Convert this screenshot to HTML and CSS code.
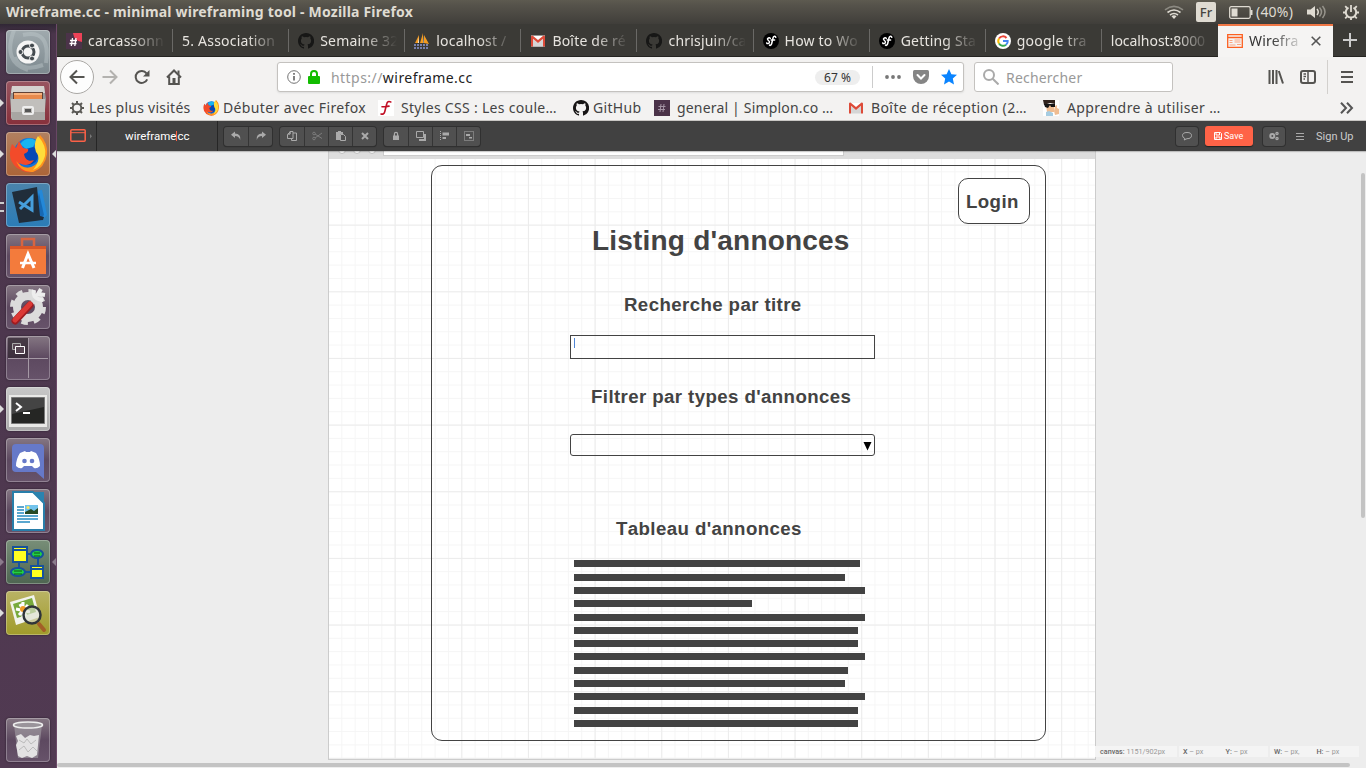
FILE: index.html
```html
<!DOCTYPE html>
<html lang="fr">
<head>
<meta charset="utf-8">
<title>Wireframe.cc - minimal wireframing tool</title>
<link rel="stylesheet" href="styles.css">
</head>
<body>
<svg class="defs">
  <symbol id="github" viewBox="0 0 16 16"><path d="M8 0C3.58 0 0 3.58 0 8c0 3.54 2.29 6.53 5.47 7.59.4.07.55-.17.55-.38v-1.34c-2.23.48-2.7-1.07-2.7-1.07-.36-.92-.89-1.17-.89-1.17-.73-.5.05-.49.05-.49.81.06 1.24.83 1.24.83.72 1.23 1.88.87 2.34.67.07-.52.28-.87.5-1.07-1.77-.2-3.64-.89-3.64-3.95 0-.87.31-1.59.82-2.15-.08-.2-.36-1.02.08-2.12 0 0 .67-.21 2.2.82a7.6 7.6 0 0 1 4 0c1.53-1.04 2.2-.82 2.2-.82.44 1.1.16 1.92.08 2.12.51.56.82 1.27.82 2.15 0 3.07-1.87 3.75-3.65 3.95.29.25.54.73.54 1.48v2.19c0 .21.15.46.55.38A8 8 0 0 0 8 0z"/></symbol>
  <symbol id="gmail" viewBox="0 0 16 16"><path fill="#eee" d="M1 2.500h14v11H1z"/><path fill="#fff" d="M2 3h12L8 8z"/><path fill="#d5d5d5" d="M3 13.500V6l5 4 5-4v7.500z"/><path fill="#dd4b39" d="M1 13.500v-10Q1 2.500 2.500 2.500L8 7l5.500-4.500Q15 2.500 15 3.500v10h-2V5.700L8 10 3 5.700v7.800z"/></symbol>
  <symbol id="symfony" viewBox="0 0 16 16"><circle cx="8" cy="8" r="8"/><path fill="none" stroke="#fff" stroke-width="1.500" stroke-linecap="round" d="M7.300 5.400C6.500 4.200 4 5 4.600 6.600c.4 1 2.200 1.200 1.800 2.800-.3 1.400-2.300 1.600-2.700.5M12.800 4.300c-.3-1.500-2.300-1.300-2.800.7L8.700 10.500c-.4 1.700-1.600 2.400-2.200 1.500M8.200 7h3.400"/></symbol>
  <symbol id="firefox" viewBox="0 0 40 40"><circle cx="21" cy="19" r="15" fill="#1674d8"/><path fill="#0648b5" d="M20 11q10 2 10 10t-9 10q-10-1-8-10z"/><path fill="#18b4f0" d="M12 10Q20 1 28 7l-3 6-7 2z"/><path fill="#f34b2a" d="M4 10l4 4 3-7 4 7 5 1c1 3-2 4-4 5 1 6 5 8 10 6q-5 8-15 3 8 12 19 6Q22 42 9 34-2 25 4 10z"/><path fill="#ff931e" d="M8 27q9 11 19 4 7-5 5-14-7-9 0-16 8 8 7 19-2 14-14 18Q13 39 8 27z"/><path fill="#ffdc3b" d="M30 2q9 10 7 20-3 11-12 14 9-11 3-18-3-9 2-16z"/></symbol>
</svg>

<div class="desktop">
  <header class="panel">
    <span class="panel-title">Wireframe.cc - minimal wireframing tool - Mozilla Firefox</span>
    <svg class="i-wifi" viewBox="0 0 20 14" fill="none" stroke-width="1.600"><path stroke="#8c8a82" d="M1 4.800Q10-2 19 4.800"/><path stroke="#dfdbd2" d="M3.500 7.500q6.500-5 13 0M6 10q4-3 8 0"/><path fill="#dfdbd2" d="M7.500 11.300q2.500-2 5 0L10 14z"/></svg>
    <span class="lang">Fr</span>
    <svg class="i-battery" viewBox="0 0 24 13" fill="none" stroke="#dfdbd2"><rect x=".7" y=".7" width="20.500" height="11.600" rx="1.500" stroke-width="1.300"/><path fill="#dfdbd2" stroke="none" d="M2.500 2.500h6v8h-6z"/><path d="M22.500 4v5" stroke-width="2"/></svg>
    <span class="charge">(40%)</span>
    <svg class="i-sound" viewBox="0 0 20 16" fill="none" stroke-width="1.500"><path fill="#dfdbd2" d="M0 5.500h3.500L8 2v12l-4.500-3.500H0z"/><path stroke="#dfdbd2" d="M10 5q2.500 3 0 6"/><path stroke="#96938b" d="M12.500 3.500q4 4.500 0 9M15.500 2q5 6 0 12"/></svg>
    <svg class="i-gear" viewBox="0 0 16 16" fill="none" stroke="#dfdbd2"><path stroke-width="2" d="M5.500 3.700a5.200 5.200 0 1 0 5 0"/><path stroke-width="1.800" d="M8 1v7M2.200 2.200L4 4M13.800 2.200L12 4M0 8.500h3M13 8.500h3M2.200 14.300L4.200 12.300M13.800 14.300l-2-2M8 13.500V16"/></svg>
  </header>

  <div class="shell">
    <nav class="launcher">
      <div class="tile tile-dash"><svg viewBox="0 0 44 44"><path fill="none" stroke="#c2ccd0" stroke-opacity=".4" stroke-width="4" d="M8 0Q-4 32 22 40M17 5q28-6 23 28M9 27q5 16 28 8"/><circle cx="22" cy="22" r="11.500" fill="#f5f5f5"/><circle cx="22" cy="22" r="6" fill="none" stroke="#444b50" stroke-width="3"/><g fill="#444b50" stroke="#f5f5f5" stroke-width="1"><circle cx="14.500" cy="22" r="2.500"/><circle cx="26" cy="15.500" r="2.500"/><circle cx="26" cy="28.500" r="2.500"/></g></svg></div>
      <div class="tile tile-files run"><svg viewBox="0 0 44 44"><path fill="#999" d="M6 5h32l2 13-2 21H6L4 18z"/><path fill="#d5d2ce" d="M6 5h32l1 7H5z"/><path fill="#614135" d="M7 11h30v8H7z"/><path fill="#e78a4c" d="M8 12h28v6H8z"/><path fill="#f7b27e" d="M8 12h28v2H8z"/><path fill="#c1bfbc" d="M5 18h34v17q0 4-3 4H8q-3 0-3-4z"/><path fill="#a8a6a3" d="M5 31h34v8H6z"/><rect x="17" y="26" width="10" height="7" rx="1" fill="none" stroke="#eee" stroke-width="2"/><path fill="#555" d="M19 28h6v3h-6z"/></svg></div>
      <div class="tile tile-firefox run focus"><svg viewBox="-2 -2 44 44"><use href="#firefox" width="40" height="40"/></svg></div>
      <div class="tile tile-code pair"><svg viewBox="0 0 44 44"><path fill="#2488d8" d="M28 8l8-1 5 25-6 6-10-2z"/><path fill="#1769b4" d="M33 10l5 22-5 5-7-3z"/><path fill="#202d3a" d="M6 9l25-5 3 29 4 1-1 3-24 3z"/><path fill="none" stroke="#469edb" stroke-width="3" d="M13 19l13 8V14L14 26"/></svg></div>
      <div class="tile"><svg viewBox="0 0 44 44"><path fill="none" stroke="#d66542" stroke-width="2.500" d="M16 13V5h12v8"/><path fill="#f37b3c" d="M4 12h36v28H4z"/><path fill="#d85628" d="M4 12h36v3H4z"/><path fill="none" stroke="#fff" stroke-width="3" d="M16.500 34l5.500-14 6 14"/><path stroke="#fff" stroke-width="2.500" d="M14 29h16"/></svg></div>
      <div class="tile"><svg viewBox="0 0 44 44"><circle cx="22" cy="22" r="11" fill="none" stroke="#dcdcdc" stroke-width="8"/><circle cx="22" cy="22" r="16" fill="none" stroke="#dcdcdc" stroke-width="4" stroke-dasharray="6.500 6.060"/><path stroke="#d9d9d9" stroke-width="5" d="M26 18l8-8"/><path fill="none" stroke="#eee" stroke-width="4" d="M28 5q-2 9 9 10M35 4l-3 5 7 1"/><path stroke="#9f1c20" stroke-width="7" stroke-linecap="round" d="M9 36l15-16"/><path stroke="#dc3935" stroke-width="5" stroke-linecap="round" d="M9 35l15-16"/></svg></div>
      <div class="tile tile-spaces"><svg viewBox="0 0 44 44"><path fill="#2d242d" opacity=".7" d="M2 2h20v20H2z"/><path stroke="#a599a5" d="M22.500 2v40M2 22.500h40"/><path fill="#574653" stroke="#aaa" d="M6.500 7.500h8v6h-8z"/><path fill="#574653" stroke="#fff" d="M9.500 10.500h9v7h-9z"/></svg></div>
      <div class="tile tile-term run"><svg viewBox="0 0 44 44"><path fill="#e9e9e7" d="M3 8h38v32H3z"/><path fill="#252624" stroke="#777" d="M5.500 10.500h33v26h-33z"/><path fill="#444" d="M6 11h32v9L6 27z"/><path fill="none" stroke="#fff" stroke-width="2" d="M10 16l5 4-5 4M17 26h7"/></svg></div>
      <div class="tile"><svg viewBox="0 0 44 44"><path fill="#6679c9" d="M10 6h24q4 0 4 4v31l-8-7H10q-4 0-4-4V10q0-4 4-4z"/><path fill="#fff" d="M14 15l5-2 1 1h4l1-1 5 2q4 6 4 13-3 3-6 2l-2-2h-8l-2 2q-3 1-6-2 0-7 4-13z"/><g fill="#6679c9"><circle cx="18.500" cy="23" r="2.300"/><circle cx="26" cy="23" r="2.300"/></g></svg></div>
      <div class="tile"><svg viewBox="0 0 44 44"><path fill="#fff" stroke="#287eaa" stroke-width="2" d="M7 3h20l11 11v27H7z"/><path fill="#2a83af" d="M27 3h11v11z"/><path stroke="#258bc0" stroke-width="1.500" d="M11 18h7M11 21h7M11 24h7M11 27h21M11 30h21M11 33h13"/><path fill="#72c3ec" d="M19 16h13v9H19z"/><path fill="#264923" d="M19 23l6-3 3 2 4-3v6H19z"/><circle cx="22" cy="18.500" r="1.500" fill="#ffe65b"/></svg></div>
      <div class="tile tile-dia run focus dim"><svg viewBox="0 0 44 44"><g stroke="#16529b" stroke-width="2"><path fill="none" d="M22 14h10v15M13 22v10h13"/><path fill="#ffff20" d="M7 7h14v15H7zM25 26h12v12H25z"/><path d="M7 10h14M25 29h12"/><ellipse cx="31" cy="14" rx="6" ry="4" fill="#21d043"/><ellipse cx="12" cy="32" rx="7" ry="4" fill="#21d043"/></g><path stroke="#125319" d="M28 13h6M28 16h6M8 31h8M8 34h8"/></svg></div>
      <div class="tile tile-viewer run"><svg viewBox="0 0 44 44"><path fill="#f2f3ec" d="M4 11l24-7 6 22-24 8z"/><path fill="#78aa3d" d="M7 13l19-6 4 14-19 6z"/><path stroke="#fff" stroke-width="3" d="M10 18l14 3M14 13l6 12M22 14l-9 10M17 11v15"/><circle cx="17" cy="18" r="3" fill="#ef9c26"/><circle cx="26" cy="24" r="8.500" fill="#dde0d1" fill-opacity=".65" stroke="#30353a" stroke-width="2.500"/><path stroke="#a35f27" stroke-width="4" stroke-linecap="round" d="M33 33l5 6"/></svg></div>
      <div class="tile tile-trash"><svg viewBox="0 0 44 44"><path fill="#aaa6ab" fill-opacity=".55" d="M8 7h28l-4 33H12z"/><ellipse cx="22" cy="7" rx="14.500" ry="3" fill="#9a949b" stroke="#eee" stroke-width="1.500"/><path fill="#e3e2e3" d="M10 18l5-2 4 4 5-3 4 1 5-1-2 20-5 3-5-2-5 2-4-2-1-6-1-5 2-4z"/><path fill="none" stroke="#bbb" d="M13 22l5 3 3-4 4 5 5-4M13 32l5-4 4 6 5-5 4 4"/></svg></div>
    </nav>

    <main class="browser">
      <div class="tabs">
        <div class="tab"><svg class="fav" viewBox="0 0 16 16"><path fill="#4b3349" d="M0 0h16v16H0z"/><path fill="#ed4257" d="M7 0h9v9Q8 8 7 0z"/><path stroke="#fff" stroke-width="1.300" d="M6.500 5L5.300 13M10 5L8.800 13M4 7.500h7M3.500 10.500h7"/></svg><span class="tab-text">carcassonn</span></div>
        <div class="tab"><span class="tab-text">5. Association</span></div>
        <div class="tab"><svg class="fav" fill="#171716"><use href="#github"/></svg><span class="tab-text">Semaine 32</span></div>
        <div class="tab"><svg class="fav" viewBox="0 0 16 16"><path fill="#f39b21" d="M1 10l4-8v8zM6 10l3-10v10zM10 10V2l5 9z"/><path fill="#eee" d="M5 4v6H4zM9.500 2v8H9z"/><path stroke="#7780ad" stroke-width="2" stroke-dasharray="2 1" d="M0 12h15M0 15h15"/></svg><span class="tab-text">localhost /</span></div>
        <div class="tab"><svg class="fav"><use href="#gmail"/></svg><span class="tab-text">Boîte de ré</span></div>
        <div class="tab"><svg class="fav" fill="#171716"><use href="#github"/></svg><span class="tab-text">chrisjuin/ca</span></div>
        <div class="tab"><svg class="fav"><use href="#symfony"/></svg><span class="tab-text">How to Wo</span></div>
        <div class="tab"><svg class="fav"><use href="#symfony"/></svg><span class="tab-text">Getting Sta</span></div>
        <div class="tab"><svg class="fav" viewBox="0 0 16 16" fill="none" stroke-width="2"><circle cx="8" cy="8" r="8" fill="#fff"/><path stroke="#ea4335" d="M4 5.500A4.700 4.700 0 0 1 11.500 5"/><path stroke="#fbbc05" d="M4 5.500a4.700 4.700 0 0 0 0 5"/><path stroke="#34a853" d="M4 10.500a4.700 4.700 0 0 0 7 1.200"/><path stroke="#4285f4" d="M11 11.700q2-1.500 1.700-3.700H8"/></svg><span class="tab-text">google tra</span></div>
        <div class="tab"><span class="tab-text tight">localhost:8000</span></div>
        <div class="tab active"><svg class="fav" viewBox="0 0 16 16" fill="none" stroke="#fc6021"><path stroke-width="1.300" d="M.7 1.700h14.600v12.600H.7z"/><path stroke-width="1.500" d="M1 4.500h14"/><path stroke="#fba581" d="M2.500 7.500h3M2.500 9.500h3M7.500 7h6M7.500 9h6M2.500 12h6M10 11.500h4"/></svg><span class="tab-text">Wirefra</span><svg class="close" viewBox="0 0 10 10"><path d="M.7.700l8.600 8.600M9.300.700L.7 9.300"/></svg></div>
        <div class="newtab"><svg viewBox="0 0 14 14"><path d="M7 0v14M0 7h14"/></svg></div>
      </div>

      <div class="navbar">
        <div class="back"><svg viewBox="0 0 16 16"><path d="M15.500 8H1.500M8 1.500L1.500 8 8 14.500"/></svg></div>
        <svg class="nav-ico forward" viewBox="0 0 16 16"><path d="M.5 8h14M8 1.500L14.500 8 8 14.500"/></svg>
        <svg class="nav-ico reload" viewBox="0 0 16 16"><path d="M13.200 10.300A6 6 0 1 1 12.500 4.300"/><path class="solid" d="M15.500 1v6.500H9z"/></svg>
        <svg class="nav-ico home" viewBox="0 0 16 16"><path d="M1 8.500l7-7 7 7M3.200 7.500V15h9.600V7.500"/><path class="solid" d="M6.500 9h3v6h-3zM11.500 1.500h2V6l-2-2z"/></svg>
        <div class="urlbar">
          <svg class="info" viewBox="0 0 14 14"><circle cx="7" cy="7" r="6.300"/><path stroke-width="1.800" d="M7 6v4.500M7 3v1.700"/></svg>
          <svg class="lock" viewBox="0 0 12 14"><path fill="none" stroke="#12bc00" stroke-width="2" d="M3 7V4a3 3 0 0 1 6 0v3"/><rect y="6" width="12" height="8" rx="1" fill="#12bc00"/></svg>
          <span class="url"><span class="scheme">https://</span>wireframe.cc</span>
          <span class="zoomlevel">67 %</span>
          <span class="url-sep"></span>
          <svg class="dots" viewBox="0 0 16 4"><circle cx="2" cy="2" r="1.900"/><circle cx="8" cy="2" r="1.900"/><circle cx="14" cy="2" r="1.900"/></svg>
          <svg class="pocket" viewBox="0 0 16 14"><path fill="#858585" d="M1.500 0h13Q16 0 16 1.500V6a8 8 0 0 1-16 0V1.500Q0 0 1.500 0z"/><path fill="none" stroke="#fff" stroke-width="2" stroke-linecap="round" d="M4.500 5L8 8.500 11.500 5"/></svg>
          <svg class="star" viewBox="0 0 16 16"><path fill="#0a84ff" d="M8 0l2.400 5.200 5.600.6-4.200 3.800L13 15.500l-5-2.900-5 2.900 1.200-5.900L0 5.800l5.600-.6z"/></svg>
        </div>
        <div class="search"><svg viewBox="0 0 16 16"><circle cx="6" cy="6" r="5"/><path d="M9.700 9.700L15.500 15.500"/></svg><span>Rechercher</span></div>
        <svg class="nav-ico library" viewBox="0 0 16 14"><path d="M1.500 0v14M5 0v14M8.500 0v14M10.800 1l4.200 12.500"/></svg>
        <svg class="nav-ico sidebar" viewBox="0 0 16 14"><rect x="1" y="1" width="14" height="12" rx="2"/><path stroke-width="1.500" d="M8 1v12M3.500 4h2.500M3.500 6.500h2.500M3.500 9h1.500"/></svg>
        <span class="nav-sep"></span>
        <svg class="nav-ico menu" viewBox="0 0 12 12"><path d="M0 1h12M0 6h12M0 11h12"/></svg>
      </div>

      <div class="bookmarks">
        <div class="bm b1"><svg viewBox="0 0 16 16" fill="none" stroke="#5a5955"><circle cx="8" cy="8" r="4.300" stroke-width="2"/><path stroke-width="2" d="M8 1v2.500M8 12.500V15M1 8h2.500M12.500 8H15M3 3l2 2M11 11l2 2M3 13l2-2M11 5l2-2"/></svg><span>Les plus visités</span></div>
        <div class="bm b2"><svg viewBox="1 1 38 38"><use href="#firefox" width="40" height="40"/></svg><span>Débuter avec Firefox</span></div>
        <div class="bm b3"><svg viewBox="0 0 16 16"><path fill="#fff" d="M0 0h16v16H0z"/><path fill="none" stroke="#c20f25" stroke-width="1.600" stroke-linecap="round" d="M12.800 2Q9.500.5 8.700 4L6.800 11.500Q6 14.800 3 14M4 6.700q3 .2 7-.6"/></svg><span>Styles CSS : Les coule…</span></div>
        <div class="bm b4"><svg fill="#171515"><use href="#github"/></svg><span>GitHub</span></div>
        <div class="bm b5"><svg viewBox="0 0 16 16"><path fill="#4b3349" d="M0 0h16v16H0z"/><path stroke="#a393a3" d="M7 4L6 12M10 4L9 12M4.500 6.500h7M4 9.500h7"/></svg><span>general | Simplon.co …</span></div>
        <div class="bm b6"><svg><use href="#gmail"/></svg><span>Boîte de réception (2…</span></div>
        <div class="bm b7"><svg viewBox="0 0 16 16"><path fill="#fff" d="M0 0h16v16H0z"/><path fill="#efbc91" d="M3 5h8v7H4zM12 6l2-1v3l2 1v5l-4 1-1-4z"/><path fill="#30231d" d="M0 0h12v4L7 3 1 5z"/><path fill="#151515" d="M1 4h11v3H8L7 5 5 8 2 7z"/><path fill="#a6cce1" d="M3 12l3-1 4 2v3H3z"/></svg><span>Apprendre à utiliser …</span></div>
        <svg class="more" viewBox="0 0 14 12"><path d="M1 .7L6 6l-5 5.300M7 .7L12 6l-5 5.300"/></svg>
      </div>

      <div class="appbar">
        <div class="screen"><svg viewBox="0 0 22 14" fill="none" stroke="#fc6147"><rect x=".8" y=".8" width="14.400" height="11.500" rx="1" stroke-width="1.500"/><path d="M1 3.700h14"/><path fill="#777" stroke="none" d="M20 5l2 2.300-2 2.300z"/></svg></div>
        <div class="brand">wireframe<i></i>cc</div>
        <div class="group">
          <b><svg viewBox="0 0 10 10"><path d="M0 3.700L4 .5v2q6 0 5.300 6.500Q8 5 4 5v2z"/></svg></b>
          <b><svg viewBox="0 0 10 10"><path d="M10 3.700L6 .5v2Q0 2.500.7 9 2 5 6 5v2z"/></svg></b>
        </div>
        <div class="group">
          <b><svg class="line" viewBox="0 0 10 10"><path d="M3 3V.5h3v7H.5V3.500L3 1M6 2h3.500v7.500h-5V7.500M3 .7v2.500H.7"/></svg></b>
          <b><svg class="line dimmed" viewBox="0 0 10 10"><circle cx="2" cy="2.500" r="1.300"/><circle cx="2" cy="7.500" r="1.300"/><path d="M3 3l7 4.500M3 7l7-5"/></svg></b>
          <b><svg viewBox="0 0 10 10"><path d="M0 1h2V0h3v1h2v2H4v6H0z"/><path fill="none" stroke="#aaa" d="M4.500 3.500h3l2 2v4h-5z"/></svg></b>
          <b><svg class="line x" viewBox="0 0 10 10"><path d="M2 2l6 6M8 2L2 8"/></svg></b>
        </div>
        <div class="group">
          <b><svg viewBox="0 0 10 10"><path d="M2 4.500h6V9H2z"/><path fill="none" stroke="#aaa" stroke-width="1.200" d="M3.400 5V3a1.600 1.600 0 0 1 3.200 0v2"/></svg></b>
          <b><svg viewBox="0 0 10 10"><path d="M3 8h5V3h2v7H3z"/><path fill="none" stroke="#aaa" d="M.5.500h7v6h-7z"/></svg></b>
          <b><svg viewBox="0 0 10 10"><path d="M2.500 1.500H9v3H2.500zM2.500 6H6v2H2.500z"/><path stroke="#aaa" stroke-dasharray="1 1" d="M.5 0v10"/></svg></b>
          <b><svg viewBox="0 0 10 10"><path fill="none" stroke="#aaa" stroke-dasharray="1 1" d="M.5.500h9v9h-9z"/><path d="M2 3h4v2H2zM5 6h3v1.500H5z"/></svg></b>
        </div>
        <div class="app-right">
          <b class="solo"><svg class="line" viewBox="0 0 10 10"><path d="M3 7.700Q.5 6.500.5 4.500.5 1.500 5 1.500t4.500 3Q9.500 7.700 5 7.700L2 9z"/></svg></b>
          <b class="save"><svg viewBox="0 0 8 8" fill="none" stroke="#fff"><path d="M.5.500h6l1 1v6h-7zM2 .5V3h3.500V.5M2 7.500V5h4v2.500"/></svg>Save</b>
          <b class="solo cogs"><svg class="line" viewBox="0 0 10 10"><circle cx="3.300" cy="5" r="2" stroke-width="2"/><circle cx="8" cy="2.500" r="1.100" stroke-width="1.300"/><circle cx="8" cy="7.500" r="1.100" stroke-width="1.300"/></svg></b>
          <svg class="burger" viewBox="0 0 8 7"><path d="M0 .5h8M0 3.500h8M0 6.500h8"/></svg>
          <span class="signup">Sign Up</span>
        </div>
      </div>

      <div class="workspace">
        <div class="canvas">
          <div class="chrome"><i></i><i></i><i></i><span></span></div>
          <div class="grid"></div>
          <div class="wf frame"></div>
          <div class="wf login">Login</div>
          <div class="wf title">Listing d'annonces</div>
          <div class="wf sub s1">Recherche par titre</div>
          <div class="wf input"></div>
          <div class="wf sub s2">Filtrer par types d'annonces</div>
          <div class="wf select"><svg viewBox="0 0 8 9"><path d="M0 0h8L4 8.500z"/></svg></div>
          <div class="wf sub s3">Tableau d'annonces</div>
          <div class="wf lines"><i class="w286"></i><i class="w271"></i><i></i><i class="w178"></i><i></i><i class="w284"></i><i class="w284"></i><i></i><i class="w274"></i><i class="w271"></i><i></i><i class="w284"></i><i class="w284"></i></div>
        </div>
        <div class="status">
          <div><span><b>canvas:</b> 1151/902px</span></div>
          <div><span><b>X</b> – px</span><span><b>Y:</b> – px</span></div>
          <div><span><b>W:</b> – px,</span><span><b>H:</b> – px</span></div>
        </div>
        <div class="vscroll"></div>
        <div class="hscroll"></div>
      </div>
    </main>
  </div>
</div>
</body>
</html>
```
FILE: styles.css
```css
* { box-sizing: border-box; }
body { margin: 0; overflow: hidden; font: 14px/20px "Noto Sans", sans-serif; }
svg { display: block; flex: none; }
.defs { position: absolute; width: 0; height: 0; }
.desktop { width: 1366px; height: 768px; display: flex; flex-direction: column; }

/* Top panel */
.panel { height: 24px; flex: none; display: flex; align-items: center; padding: 0 7px 0 6px; background: linear-gradient(#5d5a50, #56534b 20%, #403e3a); color: #dfdbd2; }
.panel-title { width: 1158px; font-weight: 700; font-size: 14px; letter-spacing: .2px; white-space: nowrap; }
.i-wifi { width: 20px; height: 14px; }
.lang { margin-left: 12px; width: 20px; height: 20px; border-radius: 2px; background: #dfdbd2; color: #47453f; text-align: center; font-size: 13px; font-weight: 500; }
.i-battery { width: 24px; height: 13px; margin-left: 13px; }
.charge { margin-left: 3px; width: 39px; white-space: nowrap; letter-spacing: .2px; }
.i-sound { width: 20px; height: 16px; margin-left: 12px; }
.i-gear { width: 16px; height: 16px; margin-left: auto; }

.shell { flex: 1; display: flex; min-height: 0; }

/* Launcher */
.launcher { width: 57px; flex: none; display: flex; flex-direction: column; gap: 7px; padding: 6px 0 6px 6px; background: linear-gradient(#302735, #4a354b 10px, #513a52); border-right: 1px solid #6d4a69; }
.tile { position: relative; width: 44px; height: 44px; border-radius: 4px; background: linear-gradient(#857783, #5d4960 50%, #67536a); box-shadow: inset 0 0 0 1px rgba(255,255,255,.28), 0 0 2px #251a28; }
.tile svg { width: 44px; height: 44px; }
.tile-dash { background: linear-gradient(#a0aaae, #7d898f); }
.tile-files { background: linear-gradient(#985560, #87303b); }
.tile-firefox { background: linear-gradient(#b18060, #ac6438); }
.tile-code { background: linear-gradient(#4a83ab, #2b7cb7); }
.tile-term { background: linear-gradient(#c7c7c7, #aaa); }
.tile-dia { background: linear-gradient(#788e78, #4e6551); }
.tile-viewer { background: linear-gradient(#b9b365, #a09b2a); }
.tile-trash { margin-top: auto; }
.run::before, .focus::after { content: ""; position: absolute; top: 18px; border: 4px solid transparent; }
.run::before { left: -6px; border-left-color: #ddd; border-right: 0; }
.focus::after { right: -6px; border-right-color: #ddd; border-left: 0; }
.dim::before { border-left-color: #8b7b8c; }
.dim::after { border-right-color: #8b7b8c; }
.pair::before { content: ""; position: absolute; left: -6px; top: 19px; width: 4px; height: 6px; border: solid #ccc; border-width: 2px 0; }

.browser { flex: 1; min-width: 0; display: flex; flex-direction: column; background: #f3f2f1; }

/* Tabs */
.tabs { height: 33px; flex: none; display: flex; background: #3b3a36; border-bottom: 1px solid #252421; color: #e7e4df; }
.tab { position: relative; width: 116.100px; flex: none; display: flex; align-items: center; gap: 6px; padding: 1px 8px 0 9px; }
.tab:not(.active):not(:nth-child(10))::after { content: ""; position: absolute; right: 0; top: 5px; width: 1px; height: 23px; background: #6a6966; }
.fav { width: 16px; height: 16px; }
.tab-text { flex: 1; letter-spacing: .2px; overflow: hidden; white-space: nowrap; -webkit-mask-image: linear-gradient(90deg, #000 calc(100% - 34px), transparent); mask-image: linear-gradient(90deg, #000 calc(100% - 34px), transparent); }
.tab-text.tight { letter-spacing: -.05px; }
.active { width: 115px; height: 33px; padding: 0 10px 1px 9px; background: #f5f4f3; color: #333; border-top: 2px solid #f07746; }
.close { width: 10px; height: 10px; margin-right: 2px; stroke: #555; stroke-width: 1.600; }
.newtab { flex: 1; display: grid; place-items: center; padding-left: 1px; }
.newtab svg { width: 14px; height: 14px; stroke: #ccc; stroke-width: 2; }

/* Navigation bar */
.navbar { height: 40px; flex: none; display: flex; align-items: center; padding-left: 3px; }
.back { width: 34px; height: 34px; border: 1px solid #aaa8a5; border-radius: 50%; background: #fdfdfd; display: grid; place-items: center; }
.back svg, .nav-ico { width: 16px; height: 16px; fill: none; stroke: #555451; stroke-width: 2; }
.nav-ico .solid { fill: #555451; stroke: none; }
.nav-ico.forward { margin-left: 8px; stroke: #b3b2af; }
.reload { margin-left: 16px; }
.home { margin-left: 16px; }
.urlbar { display: flex; align-items: center; width: 687px; height: 30px; margin-left: 95px; padding-left: 9px; border: 1px solid #c4c2bf; border-radius: 3px; background: #fff; box-shadow: 0 1px 2px #ddd; }
.info { width: 14px; height: 14px; fill: none; stroke: #737373; }
.lock { width: 12px; height: 14px; margin-left: 7px; }
.url { width: 484px; margin-left: 11px; padding-top: 1px; color: #222; letter-spacing: .45px; }
.scheme { color: #999; }
.zoomlevel { width: 45px; height: 15px; border-radius: 8px; background: #eee; color: #333; font-size: 12px; line-height: 15px; text-align: center; }
.url-sep { width: 1px; height: 22px; margin-left: 12px; background: #ccc; }
.dots { width: 16px; height: 4px; margin-left: 12px; fill: #777; }
.pocket { width: 16px; height: 14px; margin-left: 12px; }
.star { width: 16px; height: 16px; margin-left: 12px; }
.search { display: flex; align-items: center; gap: 7px; width: 199px; height: 30px; margin-left: 10px; padding-left: 8px; border: 1px solid #c4c2bf; border-radius: 3px; background: #fff; color: #999; letter-spacing: .2px; }
.search span { padding-top: 1px; }
.search svg { width: 16px; height: 16px; fill: none; stroke: #aaa; stroke-width: 2; }
.library { margin-left: 95px; }
.sidebar { margin-left: 16px; }
.nav-sep { width: 1px; height: 34px; margin-left: 11px; background: #d2d0cd; }
.nav-ico.menu { width: 12px; height: 12px; margin-left: 13px; }

/* Bookmarks */
.bookmarks { height: 24px; flex: none; display: flex; align-items: center; padding: 0 12px 2px 12px; border-bottom: 1px solid #c9c7c4; color: #444; }
.bm { display: flex; align-items: center; gap: 4px; white-space: nowrap; flex: none; }
.bm svg { width: 16px; height: 16px; }
.b1 { width: 134px; letter-spacing: .25px; }
.b2 { width: 175px; letter-spacing: .37px; }
.b3 { width: 195px; gap: 7px; letter-spacing: .3px; }
.b4 { width: 81px; letter-spacing: .3px; }
.b5 { width: 194px; gap: 7px; letter-spacing: .18px; }
.b6 { width: 195px; gap: 7px; letter-spacing: .4px; }
.b7 { gap: 8px; letter-spacing: .4px; }
.more { width: 14px; height: 12px; margin-left: auto; fill: none; stroke: #555; stroke-width: 2; }

/* Editor toolbar */
.appbar { height: 30px; flex: none; display: flex; align-items: center; background: #414141; color: #ccc; font-family: Roboto, sans-serif; position: relative; box-shadow: 0 1px 1px rgba(0,0,0,.2); z-index: 1; }
.screen { width: 40px; height: 30px; padding: 8px 0 0 13px; border-right: 1px solid #262626; }
.screen svg { width: 22px; height: 14px; }
.brand { width: 121px; height: 30px; line-height: 30px; padding-left: 28px; color: #fff; font-size: 11.500px; border-right: 1px solid #262626; margin-right: 6px; }
.brand i { display: inline-block; width: 1px; height: 10px; background: #fc6147; vertical-align: -1px; }
.group { display: flex; margin-right: 8px; border-radius: 3px; box-shadow: 0 0 0 1px #303030, 0 1px 1px #222; }
.group b, .solo { width: 24px; height: 19px; display: grid; place-items: center; background: #505050; }
.group b:first-child { border-radius: 3px 0 0 3px; }
.group b:last-child { border-radius: 0 3px 3px 0; }
.group b + b { border-left: 1px solid #353535; }
.group svg, .solo svg { width: 10px; height: 10px; fill: #aaa; }
.group svg.line, .solo svg.line { fill: none; stroke: #aaa; }
.group svg.dimmed { stroke: #7c7c7c; }
.group svg.x { stroke-width: 2; }
.app-right { margin-left: auto; display: flex; align-items: center; padding-right: 12px; }
.solo { width: 22px; border-radius: 3px; box-shadow: 0 0 0 1px #303030; }
.save { display: flex; align-items: center; gap: 2px; width: 48px; height: 20px; margin: 0 10px 0 7px; padding-left: 9px; border-radius: 3px; background: #ff6347; color: #fff; font-weight: 400; font-size: 9px; box-shadow: 0 1px 1px #222; }
.save svg { width: 8px; height: 8px; }
.burger { width: 8px; height: 7px; margin: 0 12px 0 11px; stroke: #aaa; }
.signup { font-size: 11px; width: 38px; white-space: nowrap; padding-top: 1px; }

/* Drawing surface */
.workspace { position: relative; flex: 1; background: #ededed; overflow: hidden; }
.canvas { position: absolute; left: 271px; top: 0; width: 768px; height: 609px; background: #fff; border: solid #ccc; border-width: 0 1px 1px; }
.chrome { height: 8px; display: flex; align-items: flex-start; gap: 7px; padding-left: 9px; background: #ddd; overflow: hidden; }
.chrome i { width: 8px; height: 8px; margin-top: -5px; border-radius: 50%; background: #fff; border: 1px solid #c0c0c0; }
.chrome span { width: 461px; height: 5px; background: #fff; border: solid #ccc; border-width: 0 1px 1px; }
.grid { height: 600px; background-image: linear-gradient(#ececec 1px, transparent 1px), linear-gradient(90deg, #ececec 1px, transparent 1px), linear-gradient(#f5f5f5 1px, transparent 1px), linear-gradient(90deg, #f5f5f5 1px, transparent 1px); background-size: 66.667px 66.667px, 66.667px 66.667px, 13.333px 13.333px, 13.333px 13.333px; background-position: -1px -1px; }
.wf { position: absolute; color: #434343; font: 700 18.670px/24px "Liberation Sans", sans-serif; font-kerning: none; letter-spacing: .4px; white-space: nowrap; }
.frame { left: 102px; top: 14px; width: 615px; height: 576px; border: 1px solid #434343; border-radius: 11px; }
.login { left: 629px; top: 27px; width: 72px; height: 46px; border: 1px solid #434343; border-radius: 10px; background: #fff; line-height: 45px; padding-left: 7px; }
.title { left: 263px; top: 73px; font-size: 28px; line-height: 34px; letter-spacing: .2px; }
.s1 { left: 295px; top: 142px; }
.s2 { left: 262px; top: 234px; }
.s3 { left: 287px; top: 366px; }
.input { left: 241px; top: 184px; width: 305px; height: 24px; border: 1px solid #434343; background: rgba(255,255,255,.4); padding: 2px 3px; }
.input::before { content: ""; display: block; width: 1px; height: 10px; background: #4f86d6; }
.select { left: 241px; top: 283px; width: 305px; height: 22px; border: 1px solid #434343; border-radius: 3px; display: flex; justify-content: flex-end; align-items: center; padding: 2px 2px 0 0; }
.select svg { width: 9px; height: 9px; fill: #000; }
.lines { left: 245px; top: 409.200px; display: flex; flex-direction: column; gap: 6.333px; }
.lines i { width: 291px; height: 7px; background: #434343; }
.lines .w286 { width: 286px; }
.lines .w284 { width: 284px; }
.lines .w274 { width: 274px; }
.lines .w271 { width: 271px; }
.lines .w178 { width: 178px; }

.status { position: absolute; left: 1038px; top: 595px; display: flex; gap: 2px; color: #999; font: 7.200px/11px Roboto, sans-serif; white-space: nowrap; }
.status div { width: 89px; height: 11px; display: flex; padding-left: 4px; background: #f4f4f4; }
.status div:first-child { width: 82px; padding-left: 5px; }
.status span { width: 43px; }
.status b { color: #666; font-weight: 500; }
.vscroll { position: absolute; left: 1304px; top: 22px; width: 4px; height: 345px; border-radius: 2px; background: #c3c3c3; }
.hscroll { position: absolute; left: 0; top: 612px; width: 1293px; height: 4px; border-radius: 2px; background: #c3c3c3; }
```
